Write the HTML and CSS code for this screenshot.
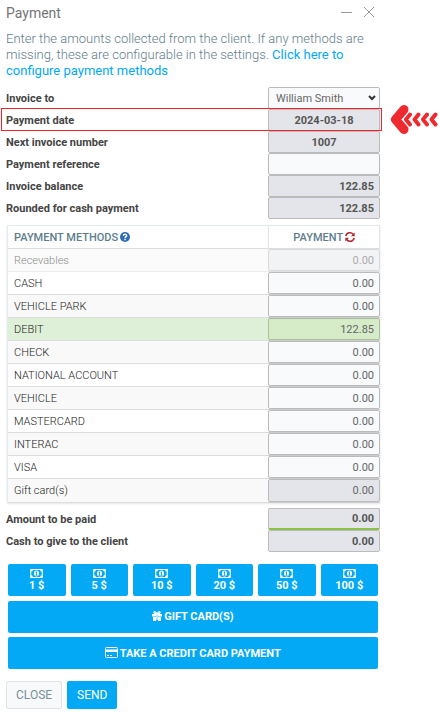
FILE: index.html
```
<!DOCTYPE html>
<html lang="en">
<head>
    <meta charset="UTF-8">
    <meta name="viewport" content="width=device-width, initial-scale=1">
    <title>Payment</title>
    <link rel="stylesheet" href="styles.css">
</head>
<body>

<!-- Shared icons -->
<svg class="sprite" aria-hidden="true">
    <symbol id="icon-bill" viewBox="0 0 14 10">
        <path fill="currentColor" fill-rule="evenodd" d="M0 0h14v10H0zM3 1.2A2 2 0 0 1 1.2 3v4A2 2 0 0 1 3 8.800h8A2 2 0 0 1 12.800 7V3A2 2 0 0 1 11 1.200z"/>
        <ellipse cx="7" cy="5" rx="2.800" ry="3.300" fill="currentColor"/>
        <path fill="none" stroke="#03a9f4" d="M6 3.800l1-.8v4M5.800 7h2.400"/>
    </symbol>
</svg>

<main class="dialog">
    <header class="dialog-header">
        <h1>Payment</h1>
        <div class="window-buttons">
            <button type="button" aria-label="Minimize">
                <svg width="12" height="14" viewBox="0 0 12 14"><path d="M0 6.500h11"/></svg>
            </button>
            <button type="button" aria-label="Close window">
                <svg width="12" height="14" viewBox="0 0 12 14"><path d="M1 1l10 10M11 1L1 11"/></svg>
            </button>
        </div>
    </header>

    <p class="intro">Enter the amounts collected from the client. If any methods are missing, these are configurable in the settings. <a href="#">Click here to configure payment methods</a></p>

    <form id="paymentForm">
        <div class="field">
            <label for="invoiceTo">Invoice to</label>
            <div class="select-wrap">
                <select id="invoiceTo"><option>William Smith</option></select>
                <svg width="8" height="6" viewBox="0 0 8 6"><path d="M1 1l3 3 3-3"/></svg>
            </div>
        </div>
        <div class="field highlighted">
            <label for="paymentDate">Payment date</label>
            <input type="text" id="paymentDate" class="readonly centered" value="2024-03-18" readonly>
            <svg class="pointer" viewBox="0 0 48 34">
                <path class="head" d="M14 6.500L5.500 16.500l8.500 10"/>
                <path class="tail" d="M20 11.500l-4 5 4 5M28.500 11.500l-4 5 4 5M37 11.500l-4 5 4 5M45.500 11.500l-4 5 4 5"/>
            </svg>
        </div>
        <div class="field">
            <label for="invoiceNumber">Next invoice number</label>
            <input type="text" id="invoiceNumber" class="readonly centered" value="1007" readonly>
        </div>
        <div class="field">
            <label for="reference">Payment reference</label>
            <input type="text" id="reference">
        </div>
        <div class="field">
            <label for="balance">Invoice balance</label>
            <input type="text" id="balance" class="readonly" value="122.85" readonly>
        </div>
        <div class="field">
            <label for="rounded">Rounded for cash payment</label>
            <input type="text" id="rounded" class="readonly" value="122.85" readonly>
        </div>

        <table class="methods">
            <thead>
                <tr>
                    <th>PAYMENT METHODS
                        <svg class="help" width="10" height="10" viewBox="0 0 10 10"><circle cx="5" cy="5" r="5" fill="#2f6eb5"/><path d="M3.400 3.800c0-2 3.300-2 3.300 0C6.700 5 5 4.800 5 6.200M5 7v1.300" fill="none" stroke="#fff" stroke-width="1.400"/></svg>
                    </th>
                    <th>PAYMENT
                        <svg class="refresh" width="10" height="10" viewBox="0 0 10 10"><path d="M.8 4.200C1.500.5 6-.5 8.400 2.500M9.200 5.800C8.500 9.500 4 10.500 1.600 7.500" fill="none" stroke="#b5282f" stroke-width="1.500"/><path d="M9.700.5v3.700H6zM.3 9.500V5.800H4z" fill="#b5282f"/></svg>
                    </th>
                </tr>
            </thead>
            <tbody>
                <tr class="disabled"><td><label for="m0">Recevables</label></td><td><input type="text" id="m0" value="0.00" disabled></td></tr>
                <tr><td><label for="m1">CASH</label></td><td><input type="text" id="m1" value="0.00"></td></tr>
                <tr><td><label for="m2">VEHICLE PARK</label></td><td><input type="text" id="m2" value="0.00"></td></tr>
                <tr class="selected"><td><label for="m3">DEBIT</label></td><td><input type="text" id="m3" value="122.85"></td></tr>
                <tr><td><label for="m4">CHECK</label></td><td><input type="text" id="m4" value="0.00"></td></tr>
                <tr><td><label for="m5">NATIONAL ACCOUNT</label></td><td><input type="text" id="m5" value="0.00"></td></tr>
                <tr><td><label for="m6">VEHICLE</label></td><td><input type="text" id="m6" value="0.00"></td></tr>
                <tr><td><label for="m7">MASTERCARD</label></td><td><input type="text" id="m7" value="0.00"></td></tr>
                <tr><td><label for="m8">INTERAC</label></td><td><input type="text" id="m8" value="0.00"></td></tr>
                <tr><td><label for="m9">VISA</label></td><td><input type="text" id="m9" value="0.00"></td></tr>
                <tr class="gift"><td><label for="m10">Gift card(s)</label></td><td><input type="text" id="m10" class="readonly" value="0.00" readonly></td></tr>
            </tbody>
        </table>

        <div class="field">
            <label for="toPay">Amount to be paid</label>
            <input type="text" id="toPay" class="readonly paid" value="0.00" readonly>
        </div>
        <div class="field">
            <label for="change">Cash to give to the client</label>
            <input type="text" id="change" class="readonly" value="0.00" readonly>
        </div>

        <div class="actions">
            <div class="bills">
                <button type="button"><svg><use href="#icon-bill"/></svg>1 $</button>
                <button type="button"><svg><use href="#icon-bill"/></svg>5 $</button>
                <button type="button"><svg><use href="#icon-bill"/></svg>10 $</button>
                <button type="button"><svg><use href="#icon-bill"/></svg>20 $</button>
                <button type="button"><svg><use href="#icon-bill"/></svg>50 $</button>
                <button type="button"><svg><use href="#icon-bill"/></svg>100 $</button>
            </div>
            <button type="button" class="wide">
                <svg width="10" height="10" viewBox="0 0 10 10"><path d="M0 3h4v2.500H0zM6 3h4v2.500H6zM1 6h3v4H1zM6 6h3v4H6zM4.300 3h1.400v6H4.300z" fill="#fff"/><path d="M4.500 3C1 3 1.500.3 3 .7 4 1 4.500 2 5 3c.5-1 1-2 2-2.300C8.500.3 9 3 5.500 3" fill="none" stroke="#fff" stroke-width="1.200"/></svg>
                GIFT CARD(S)
            </button>
            <button type="button" class="wide">
                <svg width="13" height="11" viewBox="0 0 13 11"><rect x=".5" y=".5" width="12" height="10" rx="1" fill="none" stroke="#fff"/><path d="M0 2.500h13V5H0zM2 8h2v1H2zM5 8h2v1H5z" fill="#fff"/></svg>
                TAKE A CREDIT CARD PAYMENT
            </button>
        </div>

        <footer class="dialog-footer">
            <button type="button" class="close">CLOSE</button>
            <button type="submit" class="send">SEND</button>
        </footer>
    </form>
</main>

</body>
</html>
```
FILE: styles.css
```
* {
    box-sizing: border-box;
}

body {
    margin: 0;
    background: #fff;
    color: #444;
    font-family: Roboto, sans-serif;
    font-size: 11px;
}

input, select, button {
    font-family: inherit;
    margin: 0;
}

button {
    cursor: pointer;
}

.sprite {
    display: none;
}

.dialog {
    margin-right: 59px;
    padding: 4px 0 0 6px;
}

.dialog-header {
    display: flex;
    justify-content: space-between;
    align-items: center;
    height: 18px;
    padding-right: 5px;
}

h1 {
    margin: 0;
    font-size: 14px;
    font-weight: 400;
    color: #757575;
}

.window-buttons {
    display: flex;
    gap: 10px;
}

.window-buttons button {
    display: flex;
    padding: 0;
    border: 0;
    background: none;
}

.window-buttons path {
    stroke: #999;
    fill: none;
}

.intro {
    margin: 9px 0 8px;
    font-size: 13px;
    font-weight: 300;
    line-height: 16px;
    color: #607d8b;
}

.intro a {
    color: #03a9f4;
    font-weight: 400;
    text-decoration: none;
}

/* Label and value rows */
.field {
    display: grid;
    grid-template-columns: 1fr 112px;
    align-items: center;
    height: 22px;
    position: relative;
}

.field label {
    font-weight: 700;
}

input, select {
    display: block;
    width: 100%;
    height: 22px;
    padding: 0 5px;
    border: 1px solid #bbb;
    border-radius: 2px;
    background: #f9fafc;
    color: #666;
    font-size: 11px;
    text-align: right;
}

.readonly {
    background: #e4e5ea;
}

.field input {
    font-weight: 700;
    color: #555;
}

.field .centered {
    text-align: center;
}

.field .paid {
    border-bottom: 2px solid #8bc34a;
}

.select-wrap {
    position: relative;
}

.select-wrap select {
    appearance: none;
    padding-left: 7px;
    text-align: left;
}

.select-wrap svg {
    position: absolute;
    top: 8px;
    right: 4px;
    fill: none;
    stroke: #333;
    stroke-width: 2;
    pointer-events: none;
}

/* Red frame around the highlighted row */
.highlighted::after {
    content: "";
    position: absolute;
    inset: -1px -2px 0 -5px;
    border: 1px solid #f5222a;
    pointer-events: none;
}

.pointer {
    position: absolute;
    top: -6px;
    left: calc(100% + 10px);
    width: 48px;
    height: 34px;
    fill: none;
    stroke: #ee2a2f;
    stroke-linecap: round;
    stroke-linejoin: round;
}

.pointer .head {
    stroke-width: 9;
}

.pointer .tail {
    stroke-width: 4;
}

.methods {
    width: calc(100% - 1px);
    margin: 6px 0 5px 1px;
    border-collapse: separate;
    border-spacing: 0;
    table-layout: fixed;
    border-left: 1px solid #e3eaee;
    box-shadow: 0 1px 2px #e5e5e5;
}

.methods th {
    height: 24px;
    padding: 0 0 0 6px;
    border-top: 1px solid #e3eaee;
    border-bottom: 1px solid #ddd;
    font-weight: 500;
    color: #607d8b;
    text-align: left;
}

.methods th:last-child {
    width: 112px;
    padding: 0;
    border-left: 1px solid #e3e3e3;
    border-right: 1px solid #e3e3e3;
    text-align: center;
}

.methods th svg {
    margin-left: -1px;
    vertical-align: -1px;
}

.methods td {
    height: 23px;
    padding: 0 0 0 6px;
    border-bottom: 1px solid #ddd;
}

.methods label {
    font-weight: 300;
    color: #222;
}

.methods td:last-child {
    padding: 0;
    border-color: #ccc;
}

.methods tr:nth-child(odd) td {
    background: #f9f9f9;
}

.methods tr.selected td {
    background: #dff0d8;
}

.methods .selected input {
    background: #d6ecc8;
    border-color: #a9bf9d;
}

.methods .gift td {
    height: 24px;
}

.methods .gift input {
    height: 23px;
}

.methods tr.disabled {
    opacity: .55;
}

.methods .disabled input {
    background: #e9eaed;
}

.actions {
    display: grid;
    gap: 4px;
    margin: 12px 2px;
}

.bills {
    display: grid;
    grid-template-columns: repeat(6, 1fr);
    gap: 5px;
}

.actions button {
    height: 32px;
    padding: 0;
    border: 0;
    border-radius: 2px;
    background: #03a9f4;
    color: #fff;
    font-size: 11px;
    font-weight: 700;
    line-height: 12px;
}

.actions .bills {
    margin-bottom: 1px;
}

.bills button {
    display: flex;
    flex-direction: column;
    align-items: center;
    justify-content: center;
    gap: 2px;
}

.bills svg {
    width: 13px;
    height: 9px;
}

.wide svg {
    margin-right: -1px;
    vertical-align: -1px;
}

.dialog-footer {
    display: flex;
    gap: 5px;
}

.dialog-footer button {
    height: 28px;
    padding: 0 9px;
    border: 1px solid #dfe4e7;
    border-radius: 2px;
    background: #f7f9fa;
    color: #78909c;
    font-size: 12px;
}

.dialog-footer .send {
    border-color: #03a9f4;
    background: #03a9f4;
    color: #fff;
}
```
